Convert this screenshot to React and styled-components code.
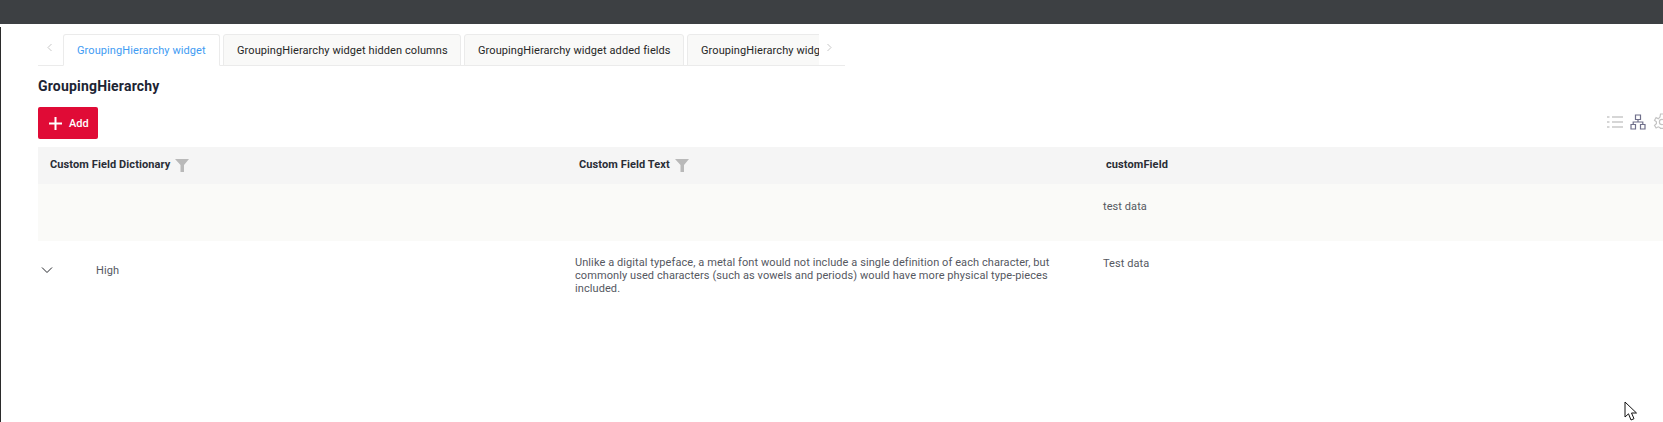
import React from "react";
import styled, { createGlobalStyle } from "styled-components";

const Global = createGlobalStyle`
  html, body { margin: 0; padding: 0; background: #fff; overflow: hidden; }
  body { font-family: Roboto, "Liberation Sans", sans-serif; width: 1663px; height: 422px; }
`;
const Page = styled.div`
  position: relative; width: 1663px; height: 422px; overflow: hidden; background: #fff;
`;
const TopBar = styled.div`height: 24px; background: #3d4043;`;
const Main = styled.div`
  height: 395px; margin-top: 3px; border-left: 1px solid #2b2b2b;
  padding: 7px 0 0 37px; box-sizing: border-box;
`;
const TabBar = styled.div`
  position: relative; display: flex; width: 807px; height: 32px; box-sizing: border-box;
  border-bottom: 1px solid #ebebeb; align-items: flex-end;
`;
const Arrow = styled.div`
  flex: none; width: ${p => p.$w}px; height: 31px; display: flex; align-items: center; justify-content: center;
  padding: 0 ${p => p.$shift || 0}px 4px 0; box-sizing: border-box; color: #c4c4c4;
`;
const Tabs = styled.div`
  flex: none; width: 756px; display: flex; gap: 3px; overflow: hidden; margin-bottom: -1px;
`;
const Tab = styled.div`
  flex: none; height: 32px; width: ${p => p.$w}px; box-sizing: border-box;
  border: 1px solid #ebebeb; border-bottom: 1px solid ${p => (p.$active ? "#fff" : "#ebebeb")};
  border-radius: 3px 3px 0 0; background: ${p => (p.$active ? "#fff" : "#f9f9f8")};
  color: ${p => (p.$active ? "#3f9cf3" : "#262626")};
  font-size: 11px; letter-spacing: 0.09px; line-height: 32px; padding-left: 13px; white-space: nowrap; overflow: hidden;
`;
const Title = styled.h1`
  margin: 12px 0 0; font-size: 14px; letter-spacing: 0.19px; line-height: 16px; font-weight: 700; color: #1d2433;
`;
const ActionRow = styled.div`
  display: flex; justify-content: space-between; align-items: center; margin-top: 13px; height: 32px;
`;
const AddButton = styled.button`
  display: flex; align-items: center; gap: 7px; width: 60px; height: 32px; padding: 1px 0 0 11px; box-sizing: border-box;
  border: 0; border-radius: 2px; background: #e00b36; color: #fff;
  font: 500 11px Roboto, sans-serif;
`;
const Tools = styled.div`
  display: flex; align-items: center; gap: 7px; margin-right: -8px; padding-bottom: 2px;
`;
const Row = styled.div`
  display: grid; grid-template-columns: 528px 527px 1fr; background: ${p => p.$bg};
  height: ${p => p.$h}px; margin-top: ${p => p.$mt || 0}px;
`;
const HeadCell = styled.div`
  display: flex; align-items: center; gap: 5px; padding-left: ${p => p.$pl}px;
  font-size: 11px; letter-spacing: 0.1px; font-weight: 700; color: #2a2d36; padding-bottom: 2px; box-sizing: border-box;
`;
const Cell = styled.div`
  font-size: 11px; letter-spacing: 0.08px; line-height: 13px; color: #55585f; padding: ${p => p.$pt}px 0 0 ${p => p.$pl}px; box-sizing: border-box;
`;
const ExpandCell = styled.div`
  display: flex; align-items: center; padding: ${p => p.$pt}px 0 0 3px; height: 14px;
`;
const HighLabel = styled.span`margin-left: 43px; font-size: 11px; letter-spacing: 0.1px; color: #55585f;`;
const Description = styled(Cell)`width: 490px;`;
const CursorMark = styled.svg`position: absolute; left: 1624px; top: 401px;`;

const Funnel = () => (
  <svg width="14" height="14" viewBox="0 0 14 14"><path d="M0 1h14L9 7v7H5.500V7z" fill="#b9b9b9" /></svg>
);

export default function App() {
  return (
    <Page>
      <Global />
      <TopBar />
      <Main>
        <TabBar>
          <Arrow $w={25} $shift={2}>
            <svg width="7" height="9" viewBox="0 0 7 9" fill="none"><path d="M5.500 1 2 4.500 5.500 8" stroke="#c8c8c8" /></svg>
          </Arrow>
          <Tabs>
            <Tab $active $w={157}>GroupingHierarchy widget</Tab>
            <Tab $w={238}>GroupingHierarchy widget hidden columns</Tab>
            <Tab $w={220}>GroupingHierarchy widget added fields</Tab>
            <Tab $w={220}>GroupingHierarchy widget custom fields</Tab>
          </Tabs>
          <Arrow $w={26} $shift={6}>
            <svg width="7" height="9" viewBox="0 0 7 9" fill="none"><path d="M1.500 1 5 4.500 1.500 8" stroke="#c8c8c8" /></svg>
          </Arrow>
        </TabBar>
        <Title>GroupingHierarchy</Title>
        <ActionRow>
          <AddButton>
            <svg width="13" height="13" viewBox="0 0 13 13"><path d="M5.500 0h2v5.500H13v2H7.500V13h-2V7.500H0v-2h5.500z" fill="#fff" /></svg>
            Add
          </AddButton>
          <Tools>
            <svg width="16" height="14" viewBox="0 0 16 14" fill="none" stroke="#c9c9c9" strokeWidth="1.300">
              <path d="M0 2h2.500M5 2h11M0 7h2.500M5 7h11M0 12h2.500M5 12h11" />
            </svg>
            <svg width="16" height="16" viewBox="0 0 16 16" fill="none" stroke="#6f6f8a" strokeWidth="1.200">
              <path d="M5.500 1h5v4.500h-5zM1 10.500h4.500V15H1zM10.500 10.500H15V15h-4.500zM8 5.500V8M3.200 10.500V8h9.600v2.500" />
            </svg>
            <svg width="18" height="18" viewBox="0 0 18 18" fill="none" stroke="#c4c4c4" strokeWidth="1.200">
              <path d="M7.500 1h3l.5 2.400 1.700.8 2.200-1.200 1.600 2.700-1.900 1.600v1.800l1.900 1.600-1.600 2.700-2.200-1.200-1.700.8-.5 2.400h-3L7 14.600l-1.700-.8-2.200 1.200-1.600-2.700L3.400 10.700V8.900L1.500 7.300l1.600-2.700 2.200 1.200L7 4z" />
              <circle cx="9" cy="9" r="2.600" />
            </svg>
          </Tools>
        </ActionRow>
        <Row $bg="#f5f5f5" $h={37} $mt={8}>
          <HeadCell $pl={12}>Custom Field Dictionary <Funnel /></HeadCell>
          <HeadCell $pl={13}>Custom Field Text <Funnel /></HeadCell>
          <HeadCell $pl={13}>customField</HeadCell>
        </Row>
        <Row $bg="#fafaf8" $h={57}>
          <Cell />
          <Cell />
          <Cell $pt={16} $pl={10}>test data</Cell>
        </Row>
        <Row $bg="#fff" $h={80}>
          <ExpandCell $pt={22}>
            <svg width="12" height="8" viewBox="0 0 12 8" fill="none"><path d="M1 1.500 6 6.500 11 1.500" stroke="#26282d" strokeWidth="1" /></svg>
            <HighLabel>High</HighLabel>
          </ExpandCell>
          <Description $pt={15} $pl={9}>
            Unlike a digital typeface, a metal font would not include a single definition of each character, but commonly used characters (such as vowels and periods) would have more physical type-pieces included.
          </Description>
          <Cell $pt={16} $pl={10}>Test data</Cell>
        </Row>
      </Main>
      <CursorMark width="14" height="21" viewBox="0 0 14 21">
        <path d="M1 1v15l3.500-3.200L7 19l3-1.300-2.500-5.700H12.500z" fill="#fff" stroke="#111" strokeWidth="1" />
      </CursorMark>
    </Page>
  );
}
